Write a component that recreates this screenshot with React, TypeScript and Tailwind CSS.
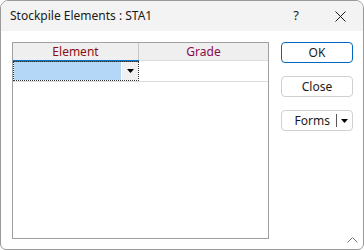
import React from "react";

export default function App() {
  return (
    <div
      className="w-[364px] h-[250px] bg-white border border-[#9a9a9a] rounded-t-[8px] rounded-b-[6px] overflow-hidden flex flex-col relative"
      style={{ fontFamily: '"Segoe UI", "Noto Sans", sans-serif' }}
    >
      <div className="h-[30px] bg-[#f3f3f3] flex items-center shrink-0">
        <div className="pl-[9px] text-[12px] text-[#1a1a1a] flex-1">Stockpile Elements : STA1</div>
        <div className="w-[46px] flex justify-center text-[13px] text-[#1a1a1a] -mr-[2px]">?</div>
        <div className="w-[46px] flex justify-center items-center">
          <svg width="11" height="11" viewBox="0 0 11 11">
            <path d="M0.5 0.5 L10.5 10.5 M10.5 0.5 L0.5 10.5" stroke="#1a1a1a" strokeWidth="1" />
          </svg>
        </div>
      </div>
      <div className="flex pl-[11px] pt-[11px] gap-[12px]">
        <div className="w-[257px] h-[197px] border border-[#a0a0a0] flex flex-col">
          <div className="flex h-[18px] bg-[#efefef] border-b border-[#dcdcdc] text-[12px]">
            <div className="w-[126px] border-r border-[#c8c8c8] flex items-center justify-center text-[#8a1010]">Element</div>
            <div className="flex-1 flex items-center justify-center text-[#8a0a50]">Grade</div>
          </div>
          <div className="h-[2px] w-[126px] bg-[#0078d7] -mt-[1px]"></div>
          <div className="flex h-[20px] border-b border-[#dcdcdc]">
            <div className="w-[126px] flex border border-dotted border-[#333] -mt-[1px]">
              <div className="flex-1 bg-[#b4d7f7]"></div>
              <div className="w-[17px] bg-[#f0f0f0] flex items-center justify-center border-l border-white">
                <svg width="7" height="4" viewBox="0 0 7 4">
                  <path d="M0 0 L7 0 L3.5 4 Z" fill="#000" />
                </svg>
              </div>
            </div>
            <div className="flex-1"></div>
          </div>
        </div>
        <div className="flex flex-col w-[72px] gap-[13px] text-[12px] text-[#1a1a1a]">
          <div className="h-[21px] border border-[#0067c0] rounded-[4px] flex items-center justify-center">OK</div>
          <div className="h-[21px] border border-[#d0d0d0] rounded-[4px] flex items-center justify-center">Close</div>
          <div className="h-[21px] border border-[#d0d0d0] rounded-[4px] flex items-center">
            <div className="flex-1 flex justify-end pr-[6px]">Forms</div>
            <div className="w-[1px] h-[13px] bg-[#555]"></div>
            <div className="w-[15px] flex justify-center">
              <svg width="7" height="4" viewBox="0 0 7 4">
                <path d="M0 0 L7 0 L3.5 4 Z" fill="#000" />
              </svg>
            </div>
          </div>
        </div>
      </div>
      <svg className="absolute right-[5px] bottom-[6px]" width="11" height="6" viewBox="0 0 11 6">
        <path d="M0.5 5.5 L5.5 0.5 L10.5 5.5" stroke="#777" strokeWidth="1" fill="none" />
      </svg>
    </div>
  );
}
